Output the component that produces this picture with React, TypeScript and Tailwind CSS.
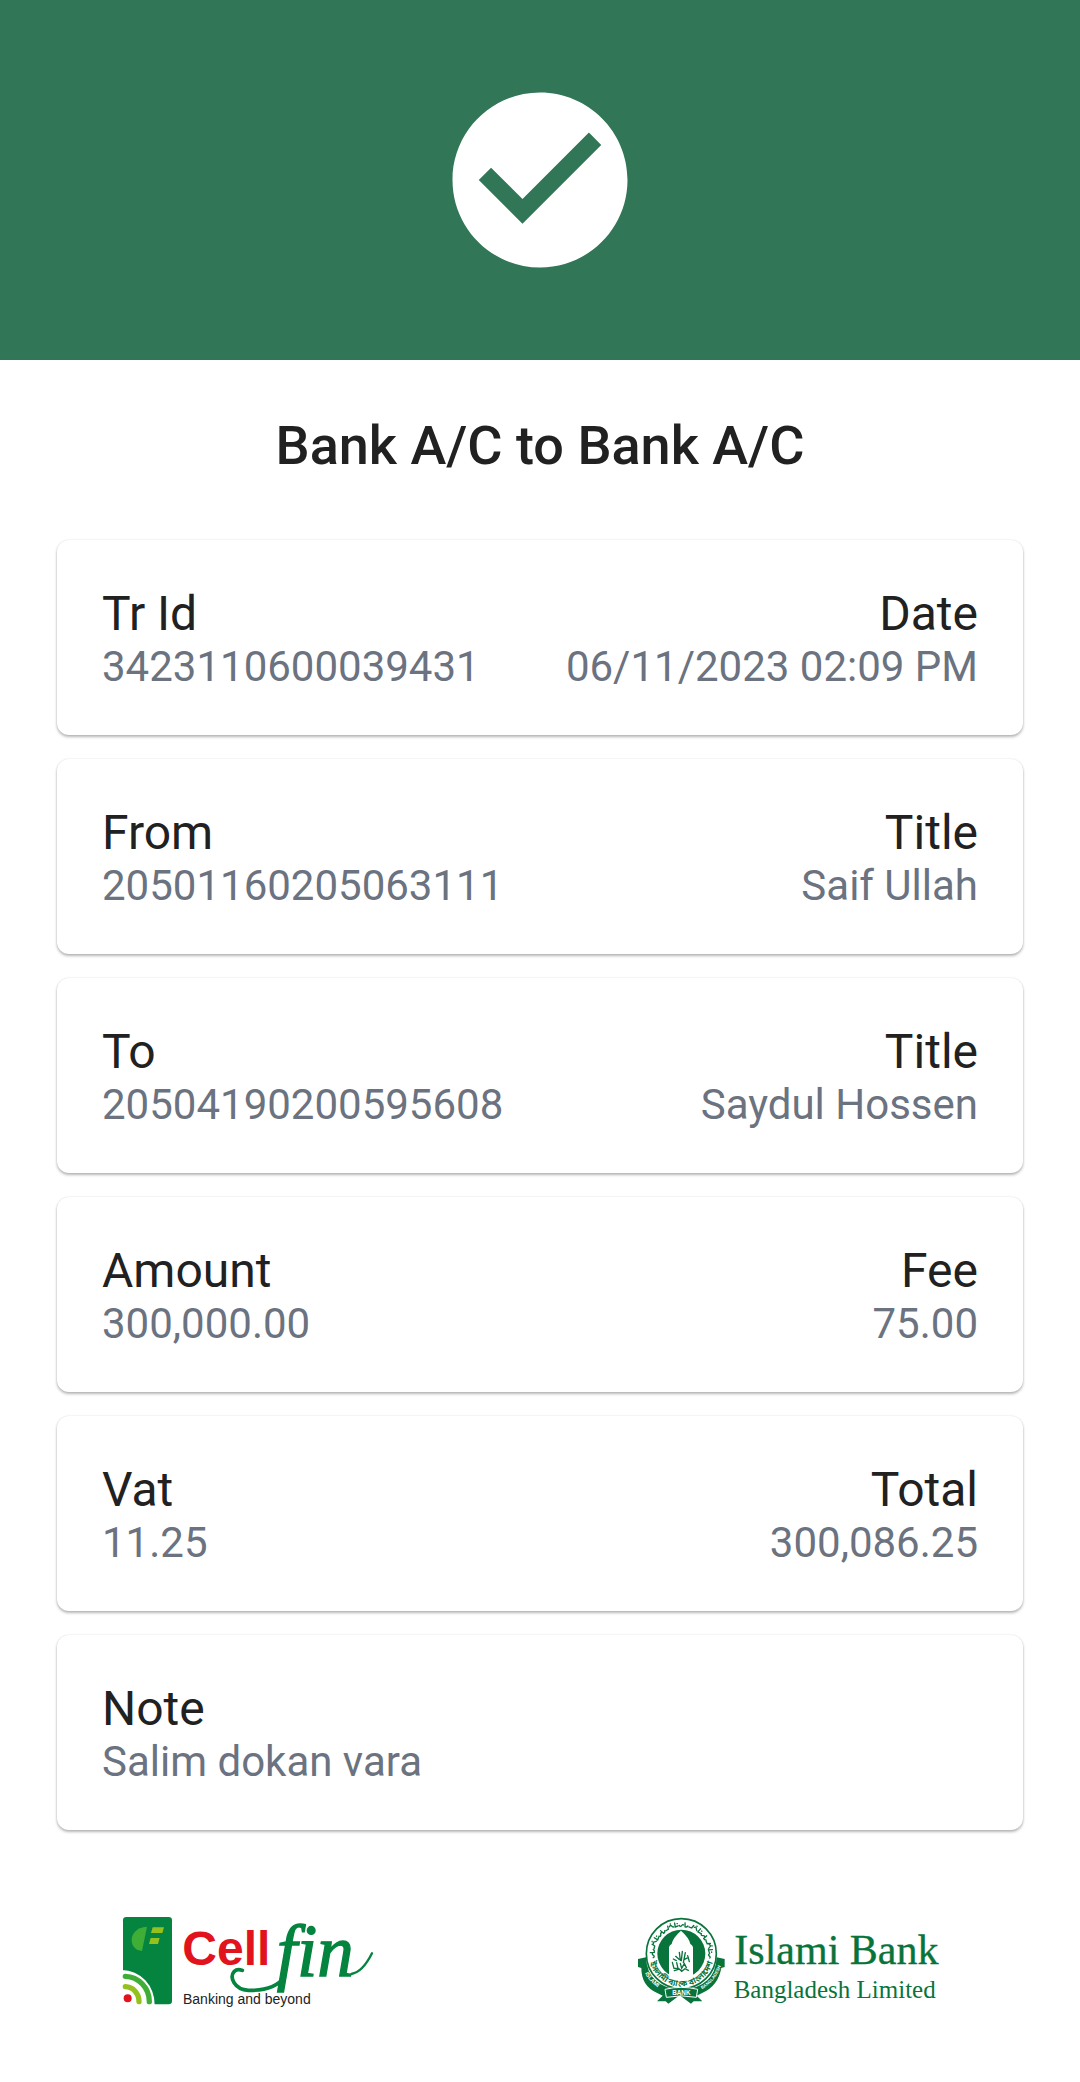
import React from "react";

type Field = { label: string; value: string };

const rows: Field[][] = [
  [
    { label: "Tr Id", value: "3423110600039431" },
    { label: "Date", value: "06/11/2023 02:09 PM" },
  ],
  [
    { label: "From", value: "20501160205063111" },
    { label: "Title", value: "Saif Ullah" },
  ],
  [
    { label: "To", value: "20504190200595608" },
    { label: "Title", value: "Saydul Hossen" },
  ],
  [
    { label: "Amount", value: "300,000.00" },
    { label: "Fee", value: "75.00" },
  ],
  [
    { label: "Vat", value: "11.25" },
    { label: "Total", value: "300,086.25" },
  ],
  [{ label: "Note", value: "Salim dokan vara" }],
];

function Card({ fields }: { fields: Field[] }) {
  return (
    <dl className="flex justify-between rounded-xl bg-white px-[45px] pt-[46px] pb-[43px] shadow-[0_2px_3px_rgba(0,0,0,0.28),0_0_2px_rgba(0,0,0,0.12)]">
      {fields.map((f) => (
        <div key={f.label} className="last:not-first:text-right">
          <dt className="text-[48px] leading-[56px] text-[#212121]">{f.label}</dt>
          <dd className="text-[42px] leading-[50px] text-[#6b7280]">{f.value}</dd>
        </div>
      ))}
    </dl>
  );
}

function CellfinLogo() {
  return (
    <svg role="img" aria-label="Cellfin" className="h-24 w-64 shrink-0 overflow-visible" viewBox="66 72 768 288">
      <rect x="69" y="81" width="147" height="262" rx="10" fill="#04843e" />
      <path d="M141 110C108 112 95 132 95 150C95 169 107 181 126 183Z" fill="#3fae37" />
      <path d="M158 112h34l-5 17h-34zM152 144h27l-5 18h-27z" fill="#95c11f" />
      <path d="M66 240a98 103 0 0 1 98 105H66z" fill="#fff" />
      <g fill="none" strokeLinecap="round" strokeWidth="16">
        <path d="M76 259a74 76 0 0 1 72 76" stroke="#3fae37" />
        <path d="M76 290a42 44 0 0 1 41 45" stroke="#95c11f" />
      </g>
      <circle cx="83" cy="325" r="12" fill="#e1131d" />
      <text x="247" y="225" fontSize="144" fontWeight="700" fill="#e1131d" fontFamily="'Liberation Sans', Arial, sans-serif">
        Cell
      </text>
      <text x="530" y="257" fontSize="219" fontStyle="italic" fill="#04843e" stroke="#04843e" strokeWidth="4" fontFamily="'Liberation Serif', 'Times New Roman', serif">
        fin
      </text>
      <g fill="none" stroke="#04843e" strokeLinecap="round">
        <path d="M553 262C530 292 490 302 445 301C403 299 387 262 403 244Q412 235 427 241" strokeWidth="11" />
        <path d="M754 252c26-4 46-30 62-62" strokeWidth="7" />
      </g>
      <text x="249" y="342" fontSize="42" fill="#222" fontFamily="'Liberation Sans', Arial, sans-serif">
        Banking and beyond
      </text>
    </svg>
  );
}

// Pen strokes of the calligraphy along the upper rim, drawn upright at twelve o'clock.
const rimStrokes = [
  "M178 76q3 6 7 1t6-2",
  "M179 68l2 12q5 1 8-4",
  "M178 78h9l3-9",
  "M178 73q4-5 7 0t5 5M183 66h1",
  "M180 67v12l9-2M187 70h1",
];

const rimAngles = [-94, -85, -76, -67, -57, -48, -39, -30, -20, -10, 0, 10, 20, 30, 40, 49, 58, 67, 76, 85, 94];

function IslamiBankLogo() {
  return (
    <svg role="img" aria-label="Islami Bank Bangladesh Limited" className="h-24 w-[322px] shrink-0" viewBox="48 42 966 288">
      <defs>
        <path id="seal-lower" d="M86 161a98 98 0 0 0 196 0" />
        <path id="ribbon-left" d="M64 193A124 124 0 0 0 138 276" />
        <path id="ribbon-right" d="M236 273A124 124 0 0 0 305 187" />
      </defs>
      <path d="M54 177l24-5q4 90 106 98q102-8 106-98l24 5v24l-10 3q-10 54-56 74l-18 9l17 17h-26l-8 7l-32-24h-4l-32 24l-8-7h-26l17-17l-18-9q-46-20-46-74l-10-3z" fill="#08743c" />
      <circle cx="184" cy="161" r="105" fill="#fff" stroke="#08743c" strokeWidth="5" />
      <circle cx="184" cy="161" r="72" fill="#08743c" />
      <path d="M147 236v-94q2-8 8-10q3-18 28-40q25 22 28 40q6 2 8 10v94z" fill="#fff" />
      <g fill="none" stroke="#08743c" strokeWidth="4" strokeLinecap="round">
        <path d="M157 187l5 18h12l-4-17m8-31l3 24m6-27l-3 28m12-24l-6 30m13-21l5 18M160 177l9 5m-2-13l10 9m15 1l13-7M163 212l15-5 7 7 10-8 10 5M181 190l4 15 8-14 6 12" />
        {rimAngles.map((angle, i) => (
          <path key={angle} d={rimStrokes[i % rimStrokes.length]} transform={`rotate(${angle} 184 161)`} />
        ))}
      </g>
      <path d="M135 268q49-12 98 0l-4 24q-45-9-90 0z" fill="#08743c" stroke="#fff" strokeWidth="3" />
      <text fill="#08743c" fontSize="25" fontWeight="700" textAnchor="middle" fontFamily="'Noto Sans Bengali', 'Noto Sans', sans-serif">
        <textPath href="#seal-lower" startOffset="50%">
          ইসলামী ব্যাংক বাংলাদেশ
        </textPath>
      </text>
      <g fill="#fff" fontWeight="700" textAnchor="middle" fontFamily="'Liberation Sans', Arial, sans-serif">
        <text fontSize="17">
          <textPath href="#ribbon-left" startOffset="50%">ISLAMI</textPath>
        </text>
        <text fontSize="13">
          <textPath href="#ribbon-right" startOffset="50%">BANGLADESH</textPath>
        </text>
        <text x="184" y="284" fontSize="19">BANK</text>
      </g>
      <g fill="#08743c" fontFamily="'Liberation Serif', 'Times New Roman', serif">
        <text x="343" y="193" fontSize="126" stroke="#08743c" strokeWidth="1">
          Islami Bank
        </text>
        <text x="341" y="293" fontSize="75">
          Bangladesh Limited
        </text>
      </g>
    </svg>
  );
}

export default function App() {
  return (
    <div className="min-h-screen bg-white font-['Roboto',sans-serif]">
      <header className="flex justify-center bg-[#317757] py-[75px]">
        <svg role="img" aria-label="Success" className="size-[210px]" viewBox="0 0 24 24" fill="#fff">
          <path d="M12 2C6.48 2 2 6.48 2 12s4.48 10 10 10 10-4.48 10-10S17.52 2 12 2zm-2 15l-5-5 1.41-1.41L10 14.17l7.59-7.59L19 8l-9 9z" />
        </svg>
      </header>
      <main className="px-[57px] pt-[54px]">
        <h1 className="text-center text-[54px] leading-[63px] font-medium text-[#212121]">Bank A/C to Bank A/C</h1>
        <div className="mt-[63px] flex flex-col gap-6">
          {rows.map((fields, i) => (
            <Card key={i} fields={fields} />
          ))}
        </div>
      </main>
      <footer className="flex items-center justify-between px-[122px] pt-[84px] pb-[72px]">
        <CellfinLogo />
        <IslamiBankLogo />
      </footer>
    </div>
  );
}
